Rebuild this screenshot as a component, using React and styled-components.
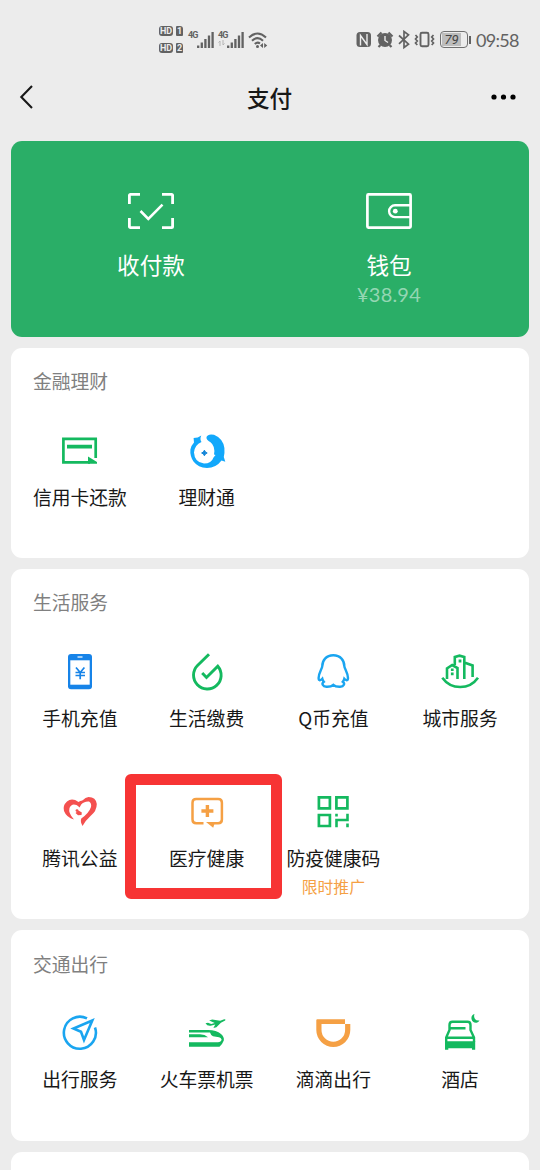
import styled, { createGlobalStyle } from "styled-components";

const GREEN = "#14b95f";
const BLUE = "#1aa5f0";
const ORANGE = "#f5a044";

export default function App() {
  return (
    <>
      <GlobalStyle />
      <Page>
        <StatusBar />
        <Header>
          <svg width="16" height="26" viewBox="0 0 16 26">
            <path d="M14 2 3.300 13 14 24" fill="none" stroke="#181818" strokeWidth="2.100" />
          </svg>
          <Title>支付</Title>
          <svg width="26" height="6" viewBox="0 0 26 6">
            <circle cx="3" cy="3" r="2.600" />
            <circle cx="12.5" cy="3" r="2.600" />
            <circle cx="22" cy="3" r="2.600" />
          </svg>
        </Header>
        <Cards>
          <WalletCard>
            <WalletItem>
              <ScanIcon />
              <WalletLabel>收付款</WalletLabel>
            </WalletItem>
            <WalletItem>
              <WalletIcon />
              <WalletLabel>钱包</WalletLabel>
              <Balance>¥38.94</Balance>
            </WalletItem>
          </WalletCard>
          {sections.map(({ title, items }) => (
            <Card key={title}>
              <CardTitle>{title}</CardTitle>
              <Grid>
                {items.map(({ name, icon, promo, marked }) => (
                  <Cell key={name}>
                    <svg width="40" height="40" viewBox="0 0 40 40" fill="none">
                      {icon}
                    </svg>
                    <Label>{name}</Label>
                    {promo && <Promo>{promo}</Promo>}
                    {marked && <Marker />}
                  </Cell>
                ))}
              </Grid>
            </Card>
          ))}
          <Card />
        </Cards>
      </Page>
    </>
  );
}

function StatusBar() {
  return (
    <Status>
      <StatusGroup>
        <SimBadges>
          <SimRow>
            <Hd>HD</Hd>
            <Sim>1</Sim>
          </SimRow>
          <SimRow>
            <Hd>HD</Hd>
            <Sim>2</Sim>
          </SimRow>
        </SimBadges>
        <Signal />
        <Signal data />
        <svg width="20" height="18" viewBox="0 0 20 18" fill="none" stroke="#626262" strokeWidth="2">
          <path d="M1 6.500Q9.500 -1.500 18 6.500M4 9.800Q9.500 4.500 15 9.800M6.800 13Q9.500 10.500 12 12.500" />
          <circle cx="9.500" cy="15.500" r="1.500" fill="#626262" stroke="none" />
          <path d="M15 12v5l-3-2.500zM16.200 12v5l3-2.500z" fill="#626262" stroke="none" />
        </svg>
      </StatusGroup>
      <StatusGroup>
        <StatusIcons />
        <Battery>
          <span>79</span>
        </Battery>
        <BatteryTip />
        <Time>09:58</Time>
      </StatusGroup>
    </Status>
  );
}

function Signal({ data }) {
  return (
    <SignalBox>
      <Network>
        4G
        {data && (
          <svg width="7" height="6" viewBox="0 0 7 6" fill="none" stroke="#b5b5b5">
            <path d="M2 6V1L.5 2.500M5 0v5l1.500-1.500" />
          </svg>
        )}
      </Network>
      <svg width="17" height="17" viewBox="0 0 17 17" stroke="#626262" strokeWidth="2.300">
        <path d="M1.200 14.500V17M4.800 11.500V17M8.400 8V17M12 4.500V17M15.600 1V17" />
      </svg>
    </SignalBox>
  );
}

// nfc, alarm, bluetooth, vibrate
function StatusIcons() {
  return (
    <svg width="80" height="20" viewBox="0 0 80 20" fill="none" stroke="#626262" strokeWidth="1.700">
      <rect x=".5" y="2" width="14.500" height="15" rx="3.500" fill="#626262" stroke="none" />
      <path d="M4.500 15.500V5.500l6.500 9V4" stroke="#ececec" strokeWidth="1.400" />
      <circle cx="29" cy="10" r="7" fill="#626262" stroke="none" />
      <path d="M21.500 6.500l4-4M36.500 6.500l-4-4M24.500 15l-2 2M33.500 15l2 2" strokeWidth="2.200" />
      <path d="M29 6v4.500l3 2" stroke="#ececec" strokeWidth="1.400" />
      <path d="M43 5.500l9.500 8.700-4.500 3.300V1.500l4.500 3.300L43 13.800" />
      <rect x="64.500" y="2.800" width="8" height="13.500" rx="1.500" strokeWidth="1.900" />
      <path d="M59.500 5l1.800 2-1.800 2 1.800 2-1.800 2 1.800 2M77.500 5l-1.800 2 1.800 2-1.800 2 1.800 2-1.800 2" strokeWidth="1.700" />
    </svg>
  );
}

function ScanIcon() {
  return (
    <svg width="48" height="38" viewBox="0 0 48 38" fill="none" stroke="#fff" strokeWidth="2.800">
      <path d="M2.400 12V3.500Q2.400 2.400 3.500 2.400H13M35 2.400h9.500q1.100 0 1.100 1.100V12M45.600 26v8.500q0 1.100-1.100 1.100H35M13 35.600H3.500q-1.100 0-1.100-1.100V26" />
      <path d="M13.500 19l7.800 7.800L35.500 12.600" strokeWidth="2.600" />
    </svg>
  );
}

function WalletIcon() {
  return (
    <svg width="48" height="38" viewBox="0 0 48 38" fill="none" stroke="#fff" strokeWidth="2.700">
      <rect x="2.400" y="2.400" width="43.200" height="33.200" rx="1" />
      <path d="M46 13.300H30a5.900 5.900 0 0 0 0 11.800h16" strokeWidth="2.400" />
      <circle cx="30.300" cy="19.200" r="2.400" fill="#fff" stroke="none" />
    </svg>
  );
}

const creditCard = (
  <>
    <path d="M35.700 27V7.800H3.400v23.600H30" stroke={GREEN} strokeWidth="2.700" />
    <path d="M7 13.700h25v3.700H7zM28 25.500l9 5.500v1.700h-9z" fill={GREEN} />
  </>
);

const fishCoin = (
  <>
    <path
      d="M23.500 11.200Q19 9 19.500 6Q21 2.500 27 3.800Q36 7.500 37.400 17Q37.800 22 36.800 26L38.300 30.800L34.500 29.500Q29 37 20 37Q11 36.500 6.500 30.500Q2.800 25 3.400 18.500Q4.500 14 7 11.500L6.600 7Q11 7 14.300 4.500Q12.500 8 14.500 11Q7.500 14 7 21.500Q7.500 31.500 17 32.500Q24.500 32.500 26.500 26.500L28.500 24L27 23.500Q28.500 15 23.500 11.200Z"
      fill="#12a8fb"
    />
    <path d="M17.400 19.200l1 1.800 1.800 1-1.800 1-1 1.800-1-1.800-1.800-1 1.800-1z" fill="#1586d8" stroke="#1586d8" />
  </>
);

const phone = (
  <>
    <rect x="8" y="2" width="24" height="35.300" rx="3" fill="#1683e8" />
    <path d="M10.300 8.300h19.400v24.400H10.300z" fill="#fff" />
    <path d="M17.500 5h5" stroke="#fff" strokeWidth="1.200" />
    <path d="M16 15.500l4.200 5 4.200-5M15.500 20.500h9.500M15.500 23.500h9.500M20.200 20v7.300" stroke="#1683e8" strokeWidth="1.700" />
  </>
);

const drop = (
  <path
    d="M22 2.200L10.500 13.500A13.800 13.800 0 1 0 30.800 14.200L19.500 25.500L15.200 21"
    stroke={GREEN}
    strokeWidth="2.900"
  />
);

const penguin = (
  <path
    d="M20.300 3.300C13 3.300 9.300 8.500 9.300 14C9.200 16.500 5.700 20.500 5.600 26C5.600 28.800 7.500 28.800 9.300 26.800Q9.700 28.500 10.800 29.700C8.300 31.500 9.500 34.600 13.500 34.800Q18 35 20.300 32.800Q22.600 35 27.100 34.800C31.100 34.600 32.300 31.500 29.800 29.700Q30.900 28.500 31.300 26.800C33.100 28.800 35 28.800 35 26C34.900 20.500 31.400 16.500 31.300 14C31.300 8.500 27.600 3.300 20.300 3.300Z"
    stroke={BLUE}
    strokeWidth="2.400"
  />
);

const city = (
  <>
    <path
      d="M2.300 25.700Q9 35 20.200 35T38 25.700M7 27V16.500L12.200 13L17.500 16V27M14.800 13V5L19.500 3.700L24.300 5V27M24.300 10.500L32.600 13.500V25"
      stroke={GREEN}
      strokeWidth="2.600"
    />
    <path d="M18.600 7.600h2.800v2.800h-2.800zM10.900 16.400h2.700v2.700h-2.700zM10.900 20.600h2.700v2.700h-2.700z" fill={GREEN} />
  </>
);

const heart = (
  <>
    <path
      d="M19.500 13.500Q22 6.500 28.500 5Q36 5.200 36.800 12Q36.800 19 30.500 24Q25.500 28.500 22.500 34Q20 29.500 21.300 26.500Q29 21 31 15Q31.800 11 29 9.500Q24.500 9 19.500 13.500Z"
      fill="#f4504f"
    />
    <path
      d="M18.500 10Q12 5.500 7 9.500Q2.500 13.500 4 19Q6.500 25.500 14 27.500Q8 21 9.500 16Q11.500 11 16.500 13Q18.500 14 19.500 15.500L23.500 8.500Q20.500 8 18.500 10Z"
      fill="#f4504f"
    />
    <circle cx="17" cy="18.600" r="1.400" fill="#f4504f" />
    <path d="M15.500 21l3-2.500 3.300 2-.3 2.500-3.500.3z" fill="#f4504f" />
  </>
);

const medical = (
  <>
    <path
      d="M16.500 31.200H9.200Q5.500 31.200 5.500 27.500V10.800Q5.500 7.100 9.200 7.100H31.200Q34.900 7.100 34.900 10.800V27.500Q34.900 31.200 31.200 31.200H25"
      stroke={ORANGE}
      strokeWidth="2.500"
    />
    <path d="M19 30h9l-1.800 5.700z" fill={ORANGE} />
    <path d="M20.400 13v12M14.400 19h12" stroke={ORANGE} strokeWidth="3.400" />
  </>
);

const qrCode = (
  <>
    <path
      d="M5.900 5.300h11v11h-11zM23.400 5.300h11v11h-11zM5.900 23h11v11h-11z"
      stroke={GREEN}
      strokeWidth="2.700"
    />
    <path
      d="M23.500 21.700v2.800M23.500 35.300V28H34.500V21.700M34.500 31.500v3.800"
      stroke={GREEN}
      strokeWidth="2.600"
    />
  </>
);

const compass = (
  <g stroke={BLUE} strokeWidth="2.600">
    <path d="M27 5.400A16 16 0 1 0 35 14.500" />
    <path d="M32.300 7.500L13.500 15.500L21 18.800L24 27Z" />
  </g>
);

const train = (
  <g fill={GREEN}>
    <path d="M2 17H21Q29.500 17.100 34 21Q37.500 24 36.800 27.500Q35.800 30.500 32.500 33.700H2V29.300H31Q34 29.300 34.600 26.500Q34 24.500 32 24.300L26 23.300Q23.500 21.500 23 19.400H2Z" />
    <path d="M2 21.300h11q5 .2 8 3H2z" />
    <path d="M18.500 10.300l2.500-.5 3.200 1.300 3.500-1.200-5.500-2.500 3-1 8 1.300 4-1.500q2 0 1 1.400l-4.300 2.200-4.500 4.500-3 .6 1.900-3.300-4.600 1.200q-3.500.5-5.200-2.500z" />
  </g>
);

const didi = (
  <path
    d="M4.300 6.300H32V11H37.300V17A17 17 0 0 1 3.300 17V7.300Q3.300 6.300 4.300 6.300ZM8.500 11V17A11.800 11.800 0 0 0 32.100 17V11Z"
    fill={ORANGE}
    fillRule="evenodd"
  />
);

const bed = (
  <>
    <path
      d="M6.200 29V24.500L9.500 17V12Q9.500 8.800 12.500 8.800H27.500Q30.500 8.800 30.500 12V17L34 24.500V29M10 15.200H25.500M6 24.800H34"
      stroke={GREEN}
      strokeWidth="2.400"
    />
    <path d="M5 28.300h30.200v8.500h-3.200v-1.600H8.300v1.600H5zM34.500 1q-3.500 1-3 5 1 4 5 3.700 2-.5 3-2.200-3 .5-4.500-1.500-1.500-2.500-.5-5z" fill={GREEN} />
  </>
);

const sections = [
  {
    title: "金融理财",
    items: [
      { name: "信用卡还款", icon: creditCard },
      { name: "理财通", icon: fishCoin },
    ],
  },
  {
    title: "生活服务",
    items: [
      { name: "手机充值", icon: phone },
      { name: "生活缴费", icon: drop },
      { name: "Q币充值", icon: penguin },
      { name: "城市服务", icon: city },
      { name: "腾讯公益", icon: heart },
      { name: "医疗健康", icon: medical, marked: true },
      { name: "防疫健康码", icon: qrCode, promo: "限时推广" },
    ],
  },
  {
    title: "交通出行",
    items: [
      { name: "出行服务", icon: compass },
      { name: "火车票机票", icon: train },
      { name: "滴滴出行", icon: didi },
      { name: "酒店", icon: bed },
    ],
  },
];

const GlobalStyle = createGlobalStyle`
  * {
    box-sizing: border-box;
  }

  body {
    margin: 0;
    background-color: #ececec;
    font-family: "Noto Sans CJK SC", sans-serif;
    color: #181818;
  }

  svg {
    display: block;
    flex-shrink: 0;
  }
`;

const Page = styled.main`
  width: 540px;
  height: 1170px;
  overflow: hidden;
`;

const Status = styled.div`
  display: flex;
  justify-content: space-between;
  height: 70px;
  padding: 0 21px 0 159px;
  color: #626262;
`;

const StatusGroup = styled.div`
  display: flex;
  align-items: center;
  height: 79px;
`;

const SimBadges = styled.div`
  display: grid;
  gap: 7px;
  margin-right: 5px;
`;

const SimRow = styled.div`
  display: flex;
  gap: 3px;
  font: bold 9px/10px "Roboto", sans-serif;
  text-align: center;
`;

const Hd = styled.span`
  width: 14px;
  height: 10px;
  border-radius: 3px;
  background-color: #626262;
  color: #ececec;
`;

const Sim = styled(Hd)`
  width: 7px;
  border-radius: 1px 3px 1px 1px;
`;

const SignalBox = styled.div`
  display: flex;
  align-items: center;
  width: 30px;
`;

const Network = styled.div`
  width: 9px;
  height: 17px;
  font: bold 9px/9px "Roboto", sans-serif;
  letter-spacing: -0.9px;
`;

const Battery = styled.div`
  width: 28px;
  height: 17px;
  margin-left: 4px;
  padding: 1px;
  border: 1.5px solid #707070;
  border-radius: 4px;
  font: italic 13px/13px "Roboto", sans-serif;
  text-align: center;
  color: #444;

  span {
    display: block;
    width: 19px;
    background-color: #bdbdbd;
  }
`;

const BatteryTip = styled.div`
  width: 2px;
  height: 8px;
  margin: 0 5px 0 1px;
  background-color: #626262;
`;

const Time = styled.span`
  width: 43px;
  font: 18px/20px "Lato", sans-serif;
  letter-spacing: -0.7px;
  white-space: nowrap;
`;

const Header = styled.header`
  display: grid;
  grid-template-columns: 60px 1fr 60px;
  align-items: center;
  height: 54px;
  margin-bottom: 16.5px;
  padding: 0 18px;

  svg:last-child {
    justify-self: end;
    margin-right: 5px;
  }
`;

const Title = styled.h1`
  margin: 2px 1px 0 0;
  font-size: 22.6px;
  font-weight: 500;
  line-height: 30px;
  text-align: center;
`;

const Cards = styled.div`
  display: grid;
  gap: 11px;
  padding: 0 11px;
`;

const WalletCard = styled.section`
  display: grid;
  grid-template-columns: 1fr 1fr;
  height: 196px;
  padding: 51.5px 21px 0;
  border-radius: 11px;
  background-color: #2aae67;
  color: #fff;
`;

const WalletItem = styled.div`
  display: flex;
  flex-direction: column;
  align-items: center;
`;

const WalletLabel = styled.span`
  margin-top: 20px;
  font-size: 22.6px;
  line-height: 30px;
`;

const Balance = styled.span`
  font: 20px/28px "Lato", sans-serif;
  letter-spacing: 0.2px;
  color: #94d6b3;
`;

const Card = styled.section`
  min-height: 60px;
  border-radius: 11px;
  background-color: #fff;
`;

const CardTitle = styled.h2`
  height: 70px;
  margin: 0;
  padding: 19.3px 22px 0;
  font-size: 18.8px;
  font-weight: 400;
  line-height: 27px;
  color: #808080;
`;

const Grid = styled.div`
  display: grid;
  grid-template-columns: repeat(4, 1fr);
  padding: 0 5.5px 0.4px;
`;

const Cell = styled.div`
  position: relative;
  display: flex;
  flex-direction: column;
  align-items: center;
  height: 140px;
  padding-top: 13.2px;
`;

const Label = styled.span`
  margin-top: 12px;
  font-size: 18.8px;
  line-height: 28px;
  white-space: nowrap;
`;

const Promo = styled.span`
  margin-top: 3px;
  font-size: 15.8px;
  line-height: 24px;
  color: ${ORANGE};
`;

// red frame around the highlighted service
const Marker = styled.div`
  position: absolute;
  top: -5.2px;
  left: -18px;
  z-index: 1;
  width: 157px;
  height: 125px;
  border: 11px solid #f73434;
  border-radius: 6px;
`;
